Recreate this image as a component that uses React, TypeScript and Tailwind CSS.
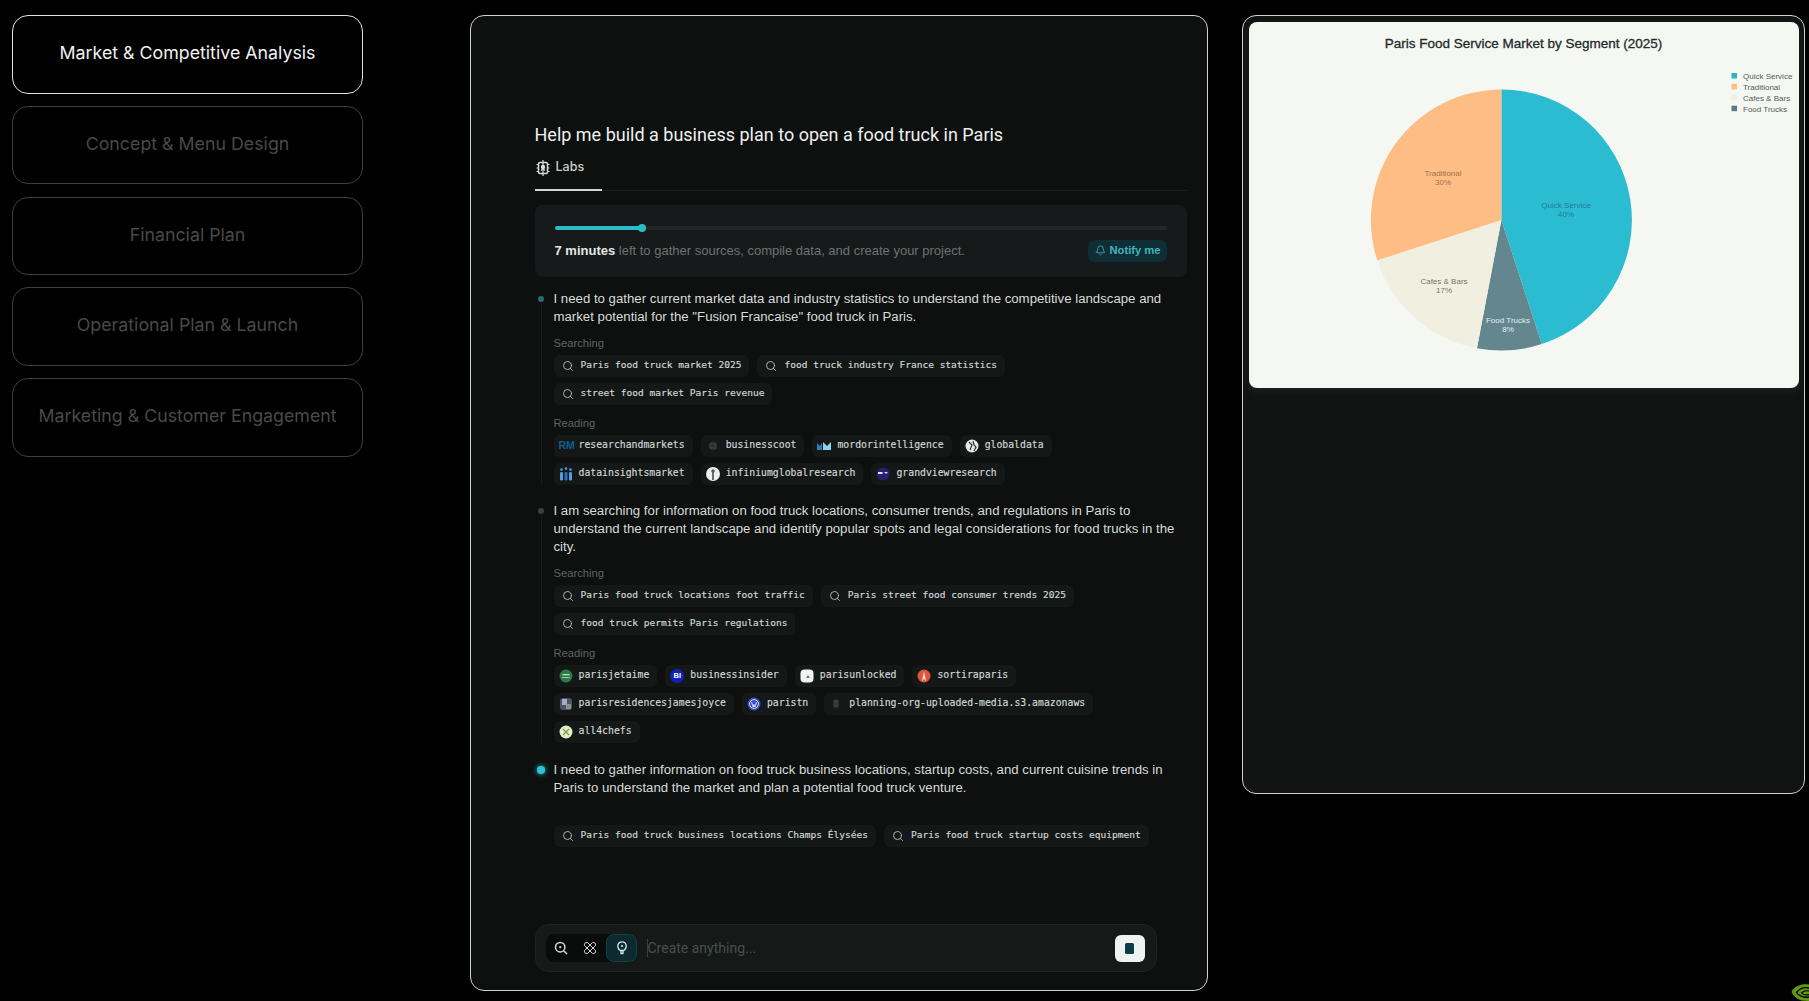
import { Bell, Search } from "lucide-react";

const tabs = [
  "Market & Competitive Analysis",
  "Concept & Menu Design",
  "Financial Plan",
  "Operational Plan & Launch",
  "Marketing & Customer Engagement",
];

const slices = [
  { name: "Quick Service", pct: 45, color: "#2bbcd2" },
  { name: "Food Trucks", pct: 8, color: "#64868f" },
  { name: "Cafes & Bars", pct: 17, color: "#f0efe0" },
  { name: "Traditional", pct: 30, color: "#fdbd85" },
];

const legend = [
  { name: "Quick Service", color: "#2bb5c4" },
  { name: "Traditional", color: "#fdbd85" },
  { name: "Cafes & Bars", color: "#f0efe0" },
  { name: "Food Trucks", color: "#64797f" },
];

const pieLabels = [
  { a: "Quick Service", b: "40%", x: 317, y: 152, color: "#217f96" },
  { a: "Traditional", b: "30%", x: 194, y: 120, color: "#a0724c" },
  { a: "Cafes & Bars", b: "17%", x: 195, y: 228, color: "#76766c" },
  { a: "Food Trucks", b: "8%", x: 259, y: 267, color: "#e4eeee" },
];

function slicePath(start: number, pct: number) {
  const cx = 252.4;
  const cy = 167;
  const r = 130.5;
  const a0 = (start / 100) * Math.PI * 2;
  const a1 = ((start + pct) / 100) * Math.PI * 2;
  const large = pct > 50 ? 1 : 0;
  const p = (a: number) => `${(cx + r * Math.sin(a)).toFixed(2)} ${(cy - r * Math.cos(a)).toFixed(2)}`;
  return `M${cx} ${cy}L${p(a0)}A${r} ${r} 0 ${large} 1 ${p(a1)}Z`;
}

function Favicon({ kind }: { kind: string }) {
  if (kind === "rm")
    return <span className="w-[16px] text-[10.5px] font-bold leading-none text-[#0f5f8f]">RM</span>;
  if (kind === "bi")
    return (
      <span className="flex h-[14px] w-[14px] items-center justify-center rounded-full bg-[#0f22b8] text-[7.5px] font-bold leading-none text-white">
        BI
      </span>
    );
  const shapes: Record<string, React.ReactNode> = {
    globe: (
      <>
        <circle cx="7" cy="7" r="4" fill="#3a3e3d" />
        <path d="M3 7h8M7 3v8" stroke="#222" strokeWidth="0.7" />
      </>
    ),
    mordor: (
      <>
        <path d="M0 11V4l3 3 2-3v7z" fill="#2a7fb8" />
        <path d="M6 11V3l4 4 4-4v8z" fill="#8fd0e8" />
      </>
    ),
    global: (
      <>
        <circle cx="7" cy="7" r="6.5" fill="#e8e8e8" />
        <path d="M4 3l3 3-2 5M8 2l1 4 2 2-2 4" stroke="#333" strokeWidth="1.2" fill="none" />
      </>
    ),
    bars: (
      <>
        <rect x="1" y="5" width="3" height="8.5" rx="1.2" fill="#4f9fe0" />
        <rect x="5.5" y="5" width="3" height="8.5" rx="1.2" fill="#2a6fc0" />
        <rect x="10" y="5" width="3" height="8.5" rx="1.2" fill="#4f9fe0" />
        <circle cx="2.5" cy="2.6" r="1.3" fill="#4f9fe0" />
        <circle cx="7" cy="1.6" r="1.3" fill="#4f9fe0" />
        <circle cx="11.5" cy="2.6" r="1.3" fill="#4f9fe0" />
      </>
    ),
    pin: (
      <>
        <circle cx="7" cy="7" r="7" fill="#f0f0ea" />
        <path d="M7 4v9" stroke="#334" strokeWidth="1.4" />
        <circle cx="7" cy="4" r="1.8" fill="#2d6a6a" />
      </>
    ),
    grand: (
      <>
        <circle cx="7" cy="7" r="6.5" fill="#2a1f6e" />
        <rect x="2" y="5" width="4.5" height="2" fill="#e8e8f0" />
        <path d="M8 5h4l-2 2z" fill="#d8d8f0" />
      </>
    ),
    jetaime: (
      <>
        <circle cx="7" cy="7" r="6.5" fill="#2f7a45" />
        <rect x="3.5" y="5" width="7" height="1.3" fill="#bfe0c8" />
        <rect x="3" y="8" width="8" height="1" fill="#9ccaa8" />
      </>
    ),
    unlocked: (
      <>
        <rect x="0.5" y="0.5" width="13" height="13" rx="4" fill="#f4f4f4" />
        <path d="M6 9l2-3 2 3z" fill="#777" />
      </>
    ),
    sortir: (
      <>
        <circle cx="7" cy="7" r="6.5" fill="#e0533c" />
        <path d="M7 2.5L5 11.5h1L7 9l1 2.5h1z" fill="#f5e6d8" />
      </>
    ),
    joyce: (
      <>
        <rect x="1" y="1" width="12" height="12" rx="3" fill="#4e5560" />
        <rect x="3" y="2" width="5" height="6" fill="#a5acc0" />
        <rect x="7" y="7" width="5" height="5" fill="#8b8f98" />
      </>
    ),
    wp: (
      <>
        <circle cx="7" cy="7" r="6.5" fill="#3d4fc0" />
        <circle cx="7" cy="7" r="4.4" fill="none" stroke="#dfe4fa" strokeWidth="0.9" />
        <path d="M4.6 5.2L6.2 10 7 7.4 7.9 10 9.5 5.2" stroke="#dfe4fa" strokeWidth="0.9" fill="none" />
      </>
    ),
    mic: (
      <>
        <rect x="4.5" y="2.5" width="5" height="8" rx="1.5" fill="#3a3e3d" />
        <path d="M3 7h8M7 10.5V12.5" stroke="#2a2d2c" strokeWidth="0.8" />
      </>
    ),
    chefs: (
      <>
        <circle cx="7" cy="7" r="6.5" fill="#e4eec4" />
        <path d="M4 4l6 6M10 4l-6 6" stroke="#7d9a5c" strokeWidth="1.3" />
      </>
    ),
  };
  return (
    <svg width="14" height="14" viewBox="0 0 14 14" className="shrink-0">
      {shapes[kind]}
    </svg>
  );
}

function SearchChip({ text }: { text: string }) {
  return (
    <div className="flex h-[22px] items-center gap-[7px] rounded-[6px] bg-[#141817] pl-[8px] pr-[8px]">
      <Search size={12} strokeWidth={1.7} className="shrink-0 text-[#c4c8c6]" />
      <span className="whitespace-nowrap font-['DejaVu_Sans_Mono',monospace] text-[9.55px] text-[#d4d8d6] [-webkit-text-stroke:0.15px_#d4d8d6]">{text}</span>
    </div>
  );
}

function ReadChip({ icon, text }: { icon: string; text: string }) {
  return (
    <div className="flex h-[22px] items-center rounded-[6px] bg-[#141817] pl-[5px] pr-[8px]">
      <span className="flex w-[20px] shrink-0 items-center">
        <Favicon kind={icon} />
      </span>
      <span className="whitespace-nowrap font-['DejaVu_Sans_Mono',monospace] text-[9.8px] text-[#d4d8d6] [-webkit-text-stroke:0.15px_#d4d8d6]">{text}</span>
    </div>
  );
}

function Label({ text, mt }: { text: string; mt: string }) {
  return <div className={`h-[16px] text-[11.2px] leading-[16px] text-[#5f6463] ${mt}`}>{text}</div>;
}

function Chips({ children }: { children: React.ReactNode }) {
  return <div className="flex w-[600px] flex-wrap gap-x-[8px] gap-y-[6px]">{children}</div>;
}

export default function App() {
  return (
    <div className="relative flex h-[1001px] w-full items-start overflow-hidden bg-black pl-[12px] pt-[15px] font-['Inter',sans-serif]">
      {/* Section tabs */}
      <div className="flex w-[351px] shrink-0 flex-col gap-[12.3px]">
        {tabs.map((t, i) => (
          <div
            key={t}
            className={
              i === 0
                ? "flex h-[78.5px] items-center justify-center rounded-[16px] border-[1.5px] border-[#dfe1e0] pb-[2px] text-[17.8px] text-[#f2f3f2]"
                : "flex h-[78.5px] items-center justify-center rounded-[16px] border border-[#3e4040] pb-[2px] text-[17.8px] text-[#484a49]"
            }
          >
            {t}
          </div>
        ))}
      </div>

      {/* Chat panel */}
      <div className="ml-[107px] flex h-[976px] w-[738px] shrink-0 flex-col rounded-[14px] border-[1.5px] border-[#cfd2d1] bg-[#0d100f] pl-[63.5px] pr-[20px] pt-[106.5px] pb-[18px] font-['Liberation_Sans',sans-serif]">
        <div className="h-[24px] font-['Roboto',sans-serif] text-[18px] leading-[24px] text-[#eef0ef]">
          Help me build a business plan to open a food truck in Paris
        </div>

        <div className="mt-[8px] flex h-[36px] border-b border-[#1a1e1d]">
          <div className="flex h-[36px] w-[67px] items-center gap-[6px] border-b-2 border-[#d5d8d6] pb-[8px] pl-[1px]">
            <svg width="14" height="16" viewBox="0 0 14 16" className="shrink-0" stroke="#d8dbd9" fill="none">
              <rect x="2.5" y="2.5" width="9" height="11" rx="1.5" strokeWidth="1.5" />
              <path d="M7 0v16M0.5 4.5h2M0.5 8h2M0.5 11.5h2M11.5 4.5h2M11.5 8h2M11.5 11.5h2" strokeWidth="1.2" />
              <circle cx="7" cy="7" r="2.2" fill="#d8dbd9" stroke="none" />
              <path d="M5 10.5l2-2 2 2" strokeWidth="1.1" />
            </svg>
            <span className="font-['Inter',sans-serif] text-[12.5px] font-medium text-[#c9cccb]">Labs</span>
          </div>
        </div>

        {/* Progress */}
        <div className="mt-[14px] h-[72px] rounded-[8px] bg-[#161a1a] px-[20px] pt-[21px]">
          <div className="relative h-[4px] rounded-full bg-[#232726]">
            <div className="h-[4px] w-[87px] rounded-full bg-[#2bbcc9]" />
            <div className="absolute left-[83px] top-[-2px] h-[8px] w-[8px] rounded-full bg-[#2bbcc9]" />
          </div>
          <div className="mt-[10px] flex items-center justify-between">
            <div className="text-[13px] text-[#6d7271]">
              <span className="font-bold text-[#e6e8e7]">7 minutes</span> left to gather sources, compile data, and create your project.
            </div>
            <div className="flex h-[22px] w-[79px] items-center justify-center gap-[4px] rounded-[7px] bg-[#0f2e35] text-[11.2px] font-bold text-[#3fb5c0]">
              <Bell size={11} strokeWidth={1.8} />
              Notify me
            </div>
          </div>
        </div>

        {/* Step 1 */}
        <div className="mt-[13px] flex">
          <div className="mr-[6px] flex w-[13px] shrink-0 flex-col items-center">
            <div className="mt-[6px] h-[6px] w-[6px] rounded-full bg-[#2e6a73]" />
            <div className="mt-[2px] w-px flex-1 bg-[#1a1e1d]" />
          </div>
          <div>
            <div className="w-[625px] text-[13.22px] leading-[18px] text-[#d8dcda]">
              I need to gather current market data and industry statistics to understand the competitive landscape and market potential for the "Fusion Francaise" food truck in Paris.
            </div>
            <Label text="Searching" mt="mt-[9px]" />
            <div className="mt-[4px]">
              <Chips>
                <SearchChip text="Paris food truck market 2025" />
                <SearchChip text="food truck industry France statistics" />
                <SearchChip text="street food market Paris revenue" />
              </Chips>
            </div>
            <Label text="Reading" mt="mt-[10px]" />
            <div className="mt-[4px]">
              <Chips>
                <ReadChip icon="rm" text="researchandmarkets" />
                <ReadChip icon="globe" text="businesscoot" />
                <ReadChip icon="mordor" text="mordorintelligence" />
                <ReadChip icon="global" text="globaldata" />
                <ReadChip icon="bars" text="datainsightsmarket" />
                <ReadChip icon="pin" text="infiniumglobalresearch" />
                <ReadChip icon="grand" text="grandviewresearch" />
              </Chips>
            </div>
          </div>
        </div>

        {/* Step 2 */}
        <div className="flex pt-[17px]">
          <div className="mr-[6px] flex w-[13px] shrink-0 flex-col items-center">
            <div className="mt-[6px] h-[6px] w-[6px] rounded-full bg-[#3c4140]" />
            <div className="mt-[2px] w-px flex-1 bg-[#1a1e1d]" />
          </div>
          <div>
            <div className="w-[625px] text-[13.22px] leading-[18px] text-[#d8dcda]">
              I am searching for information on food truck locations, consumer trends, and regulations in Paris to understand the current landscape and identify popular spots and legal considerations for food trucks in the city.
            </div>
            <Label text="Searching" mt="mt-[9px]" />
            <div className="mt-[4px]">
              <Chips>
                <SearchChip text="Paris food truck locations foot traffic" />
                <SearchChip text="Paris street food consumer trends 2025" />
                <SearchChip text="food truck permits Paris regulations" />
              </Chips>
            </div>
            <Label text="Reading" mt="mt-[10px]" />
            <div className="mt-[4px]">
              <Chips>
                <ReadChip icon="jetaime" text="parisjetaime" />
                <ReadChip icon="bi" text="businessinsider" />
                <ReadChip icon="unlocked" text="parisunlocked" />
                <ReadChip icon="sortir" text="sortiraparis" />
                <ReadChip icon="joyce" text="parisresidencesjamesjoyce" />
                <ReadChip icon="wp" text="paristn" />
                <ReadChip icon="mic" text="planning-org-uploaded-media.s3.amazonaws" />
                <ReadChip icon="chefs" text="all4chefs" />
              </Chips>
            </div>
          </div>
        </div>

        {/* Step 3 */}
        <div className="flex pt-[18px]">
          <div className="mr-[6px] flex w-[13px] shrink-0 flex-col items-center">
            <div className="mt-[5px] h-[8px] w-[8px] rounded-full bg-[#2cc4d4] shadow-[0_0_5px_#2cc4d4]" />
          </div>
          <div>
            <div className="w-[625px] text-[13.22px] leading-[18px] text-[#d8dcda]">
              I need to gather information on food truck business locations, startup costs, and current cuisine trends in Paris to understand the market and plan a potential food truck venture.
            </div>
            <div className="mt-[28px]">
              <Chips>
                <SearchChip text="Paris food truck business locations Champs Élysées" />
                <SearchChip text="Paris food truck startup costs equipment" />
              </Chips>
            </div>
          </div>
        </div>

        {/* Input */}
        <div className="mt-auto flex h-[48px] w-[622px] items-center rounded-[14px] border border-[#202423] bg-[#151918] pl-[10px] pr-[11px]">
          <div className="flex h-[28px] w-[91px] items-center rounded-[8px] bg-[#0a0c0c] pl-[8.5px]">
            <svg width="14" height="14" viewBox="0 0 14 14" fill="none" stroke="#d4d8d6" strokeWidth="1.5" className="mr-[15px] shrink-0">
              <circle cx="6.2" cy="6.2" r="4.7" />
              <circle cx="6.2" cy="6.2" r="1.1" fill="#d4d8d6" stroke="none" />
              <path d="M9.7 9.7L13 13" />
            </svg>
            <svg width="14" height="14" viewBox="0 0 14 14" fill="none" stroke="#d4d8d6" strokeWidth="1" className="shrink-0">
              <path d="M1.5 4.500C1 2.500 2.500 1 4.500 1.500L12.500 9.500C13 11.500 11.500 13 9.500 12.500z" />
              <path d="M12.500 4.500C13 2.500 11.500 1 9.500 1.500L1.500 9.500C1 11.500 2.500 13 4.500 12.500z" />
            </svg>
            <div className="ml-[9px] flex h-[28px] w-[31px] shrink-0 items-center justify-center rounded-[8px] border border-[#14404a] bg-[#0d2a30]">
              <svg width="10" height="15" viewBox="0 0 10 15" fill="none" stroke="#d4e4e6" strokeWidth="1.3">
                <path d="M3.200 9.500C1.800 8.800 0.800 7.300 0.800 5a4.200 4.200 0 0 1 8.400 0c0 2.300-1 3.800-2.400 4.500z" />
                <circle cx="5" cy="5" r="1.100" fill="#d4e4e6" stroke="none" />
                <path d="M3.500 12.500h3M4 9.500v3M6 9.500v3" />
              </svg>
            </div>
          </div>
          <div className="ml-[10px] h-[18px] w-px bg-[#3a3f3e]" />
          <div className="font-['Roboto',sans-serif] text-[14px] text-[#4a4f4e]">Create anything...</div>
          <div className="ml-auto flex h-[27px] w-[30px] items-center justify-center rounded-[6px] bg-[#eef2f0]">
            <div className="h-[11px] w-[9px] rounded-[1.5px] bg-[#0e3c44]" />
          </div>
        </div>
      </div>

      {/* Chart panel */}
      <div className="ml-[34px] h-[779px] w-[563px] shrink-0 rounded-[14px] border-[1.5px] border-[#cfd2d1] bg-[#111413] px-[5.5px] pt-[5.5px]">
        <div className="h-[366px] w-[550px] rounded-[8px] bg-[#f4f7f2] pt-[13px] shadow-[0_4px_8px_rgba(255,255,255,0.05)]">
          <div className="h-[18px] text-center font-['Liberation_Sans',sans-serif] text-[13.5px] leading-[18px] text-[#25292a] [-webkit-text-stroke:0.3px_#25292a]">
            Paris Food Service Market by Segment (2025)
          </div>
          <svg viewBox="0 0 550 334" className="h-[334px] w-[550px]" fontFamily="Liberation Sans, sans-serif" fontSize="8">
            {slices.map((s, i) => {
              const start = slices.slice(0, i).reduce((n, x) => n + x.pct, 0);
              return <path key={s.name} d={slicePath(start, s.pct)} fill={s.color} />;
            })}
            {pieLabels.map((l) => (
              <text key={l.a} textAnchor="middle" fill={l.color}>
                <tspan x={l.x} y={l.y + 3}>
                  {l.a}
                </tspan>
                <tspan x={l.x} y={l.y + 12}>
                  {l.b}
                </tspan>
              </text>
            ))}
            {legend.map((l, i) => (
              <g key={l.name}>
                <rect x="482.5" y={20 + i * 10.9} width="5.5" height="5.5" fill={l.color} />
                <text x="494" y={26 + i * 10.9} fill="#555b5c">
                  {l.name}
                </text>
              </g>
            ))}
          </svg>
        </div>
      </div>

      {/* NVIDIA mark, cut off by the corner */}
      <svg width="18" height="18" viewBox="0 0 18 18" className="absolute bottom-0 right-0" fill="none">
        <path d="M8 2.5C4.500 3.500 1.500 6 0.500 9c1.500 3.500 5 7 10 8.500L18 18V1.500C14 1 11 1.500 8 2.500z" fill="#5f9a10" />
        <path d="M18 5c-5-1-10 1-12.500 4.500 2 3.500 7.500 5.500 12.500 4.500" stroke="#000" strokeWidth="1.3" />
        <path d="M18 8c-3-.5-6 .3-7.500 1.800 1.500 1.700 4.500 2.400 7.500 1.800" stroke="#000" strokeWidth="1.1" />
      </svg>
    </div>
  );
}
